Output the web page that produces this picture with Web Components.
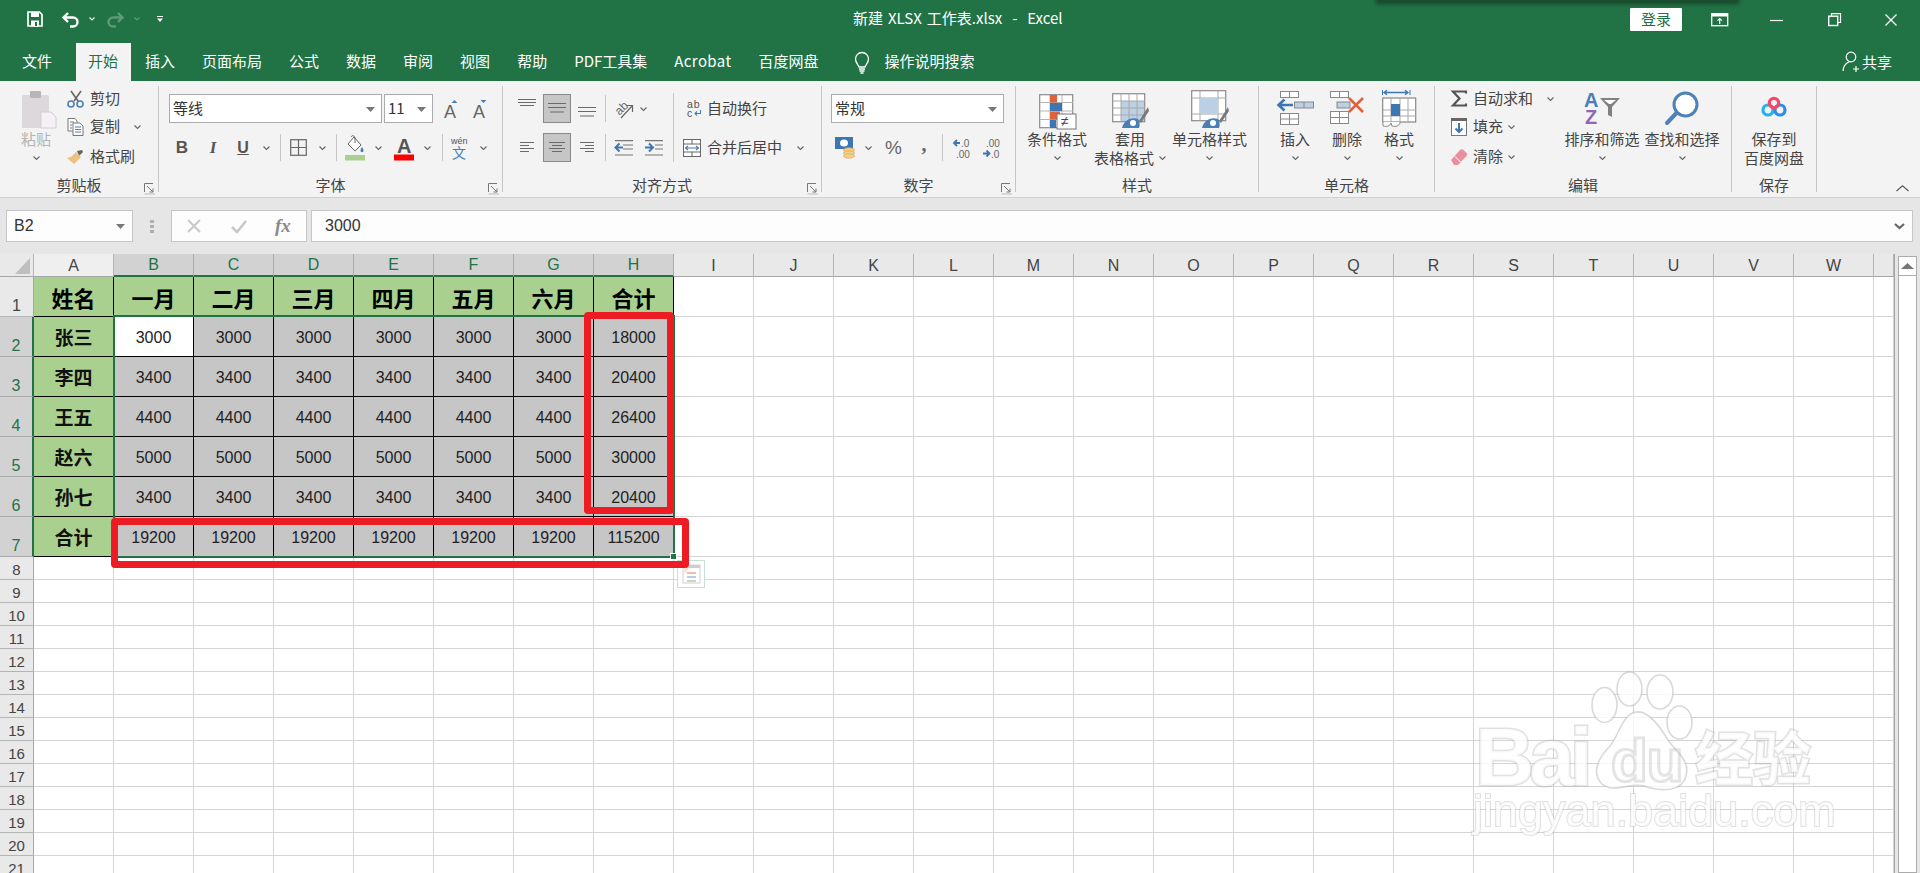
<!DOCTYPE html>
<html lang="zh-CN"><head><meta charset="utf-8"><title>新建 XLSX 工作表.xlsx - Excel</title>
<style>
html,body{margin:0;padding:0;height:873px;overflow:hidden;background:#e6e6e6}
body{font-family:"Noto Sans CJK SC","Liberation Sans",sans-serif;font-size:15px;color:#444}
xl-app{display:flex;flex-direction:column;width:1920px;height:873px;overflow:hidden}
</style></head><body>
<xl-app>
<xl-titlebar></xl-titlebar>
<xl-tabs></xl-tabs>
<xl-ribbon>
  <xl-group label="剪贴板" w="159" launcher="1" pl="6">
    <rb-large icon="paste" iw="40" ih="38" w="60" l1="粘贴" dim="1"></rb-large>
    <rb-stack ml="1">
      <rb-small icon="scissors" iw="17" ih="18" label="剪切" gap="6"></rb-small>
      <rb-small icon="copy" iw="17" ih="18" label="复制" gap="6" chev="14"></rb-small>
      <rb-small icon="brush" iw="17" ih="16" label="格式刷" gap="6"></rb-small>
    </rb-stack>
  </xl-group>
  <xl-group label="字体" w="344" launcher="1" pl="10">
    <rb-rows>
      <rb-row>
        <rb-select w="213" value="等线"></rb-select>
        <rb-select w="49" ml="2" value="11"></rb-select>
        <rb-i icon="aup" w="15" h="18" ml="11"></rb-i>
        <rb-i icon="adown" w="15" h="18" ml="14"></rb-i>
      </rb-row>
      <rb-row>
        <rb-i ml="6" w="14" h="20"><span style="font:700 17px 'Liberation Sans';color:#555">B</span></rb-i>
        <rb-i ml="18" w="12" h="20"><span style="font:italic 700 17px 'Liberation Serif';color:#555">I</span></rb-i>
        <rb-i ml="17" w="14" h="20"><span style="font:700 16px 'Liberation Sans';color:#555;text-decoration:underline">U</span></rb-i>
        <rb-i icon="chev" w="7" h="4" ml="13"></rb-i>
        <rb-i icon="sep" w="1" h="27" ml="10"></rb-i>
        <rb-i icon="borders" w="17" h="17" ml="9"></rb-i>
        <rb-i icon="chev" w="7" h="4" ml="12"></rb-i>
        <rb-i icon="sep" w="1" h="27" ml="10"></rb-i>
        <rb-i icon="fillc" w="20" h="24" ml="8"></rb-i>
        <rb-i icon="chev" w="7" h="4" ml="10"></rb-i>
        <rb-i icon="fontc" w="20" h="24" ml="12"></rb-i>
        <rb-i icon="chev" w="7" h="4" ml="10"></rb-i>
        <rb-i icon="sep" w="1" h="27" ml="11"></rb-i>
        <rb-i icon="wen" w="16" h="24" ml="8"></rb-i>
        <rb-i icon="chev" w="7" h="4" ml="13"></rb-i>
      </rb-row>
    </rb-rows>
  </xl-group>
  <xl-group label="对齐方式" w="319" launcher="1" pl="15">
    <rb-rows>
      <rb-row>
        <rb-i icon="atop" w="18" h="29"></rb-i>
        <rb-i icon="amid" w="28" h="29" ml="7" active="1"></rb-i>
        <rb-i icon="abot" w="18" h="29" ml="7"></rb-i>
        <rb-i icon="sep" w="1" h="27" ml="9"></rb-i>
        <rb-i icon="orient" w="18" h="22" ml="9"></rb-i>
        <rb-i icon="chev" w="7" h="4" ml="7"></rb-i>
      </rb-row>
      <rb-row>
        <rb-i icon="aleft" w="18" h="29"></rb-i>
        <rb-i icon="acen" w="28" h="29" ml="7" active="1"></rb-i>
        <rb-i icon="aright" w="18" h="29" ml="7"></rb-i>
        <rb-i icon="sep" w="1" h="27" ml="9"></rb-i>
        <rb-i icon="inddec" w="18" h="16" ml="9"></rb-i>
        <rb-i icon="indinc" w="18" h="16" ml="12"></rb-i>
      </rb-row>
    </rb-rows>
    <rb-i icon="sep" w="1" h="69" ml="10" top="1"></rb-i>
    <rb-rows>
      <rb-row><rb-small icon="abc" iw="16" ih="18" label="自动换行" gap="5" ml="12"></rb-small></rb-row>
      <rb-row><rb-small icon="merge" iw="18" ih="18" label="合并后居中" gap="6" ml="9" chev="15"></rb-small></rb-row>
    </rb-rows>
  </xl-group>
  <xl-group label="数字" w="194" launcher="1" pl="9">
    <rb-rows>
      <rb-row><rb-select w="173" value="常规"></rb-select></rb-row>
      <rb-row>
        <rb-i icon="currency" w="20" h="22" ml="4"></rb-i>
        <rb-i icon="chev" w="7" h="4" ml="10"></rb-i>
        <rb-i ml="14" w="15" h="20"><span style="font:400 19px 'Liberation Sans';color:#666">%</span></rb-i>
        <rb-i ml="19" w="8" h="20"><span style="font:700 20px 'Liberation Serif';color:#666;position:relative;top:-3px">,</span></rb-i>
        <rb-i icon="sep" w="1" h="27" ml="14"></rb-i>
        <rb-i icon="decinc" w="16" h="20" ml="10"></rb-i>
        <rb-i icon="decdec" w="16" h="20" ml="14"></rb-i>
      </rb-row>
    </rb-rows>
  </xl-group>
  <xl-group label="样式" w="243" pl="11">
    <rb-large icon="cond" iw="37" ih="34" w="60" l1="条件格式"></rb-large>
    <rb-large icon="tablef" iw="37" ih="35" w="76" ml="5" l1="套用" l2="表格格式"></rb-large>
    <rb-large icon="cellst" iw="38" ih="38" w="75" ml="4" l1="单元格样式"></rb-large>
  </xl-group>
  <xl-group label="单元格" w="176" pl="11">
    <rb-large icon="insert" iw="37" ih="34" w="50" ib="5" l1="插入"></rb-large>
    <rb-large icon="delete" iw="35" ih="33" w="50" ml="2" ib="6" l1="删除"></rb-large>
    <rb-large icon="format" iw="35" ih="37" w="50" ml="2" ib="3" l1="格式"></rb-large>
  </xl-group>
  <xl-group label="编辑" w="297" pl="16">
    <rb-stack w="110">
      <rb-small icon="sigma" iw="16" ih="17" label="自动求和" gap="6" chev="14"></rb-small>
      <rb-small icon="fill" iw="16" ih="18" label="填充" gap="6" chev="5"></rb-small>
      <rb-small icon="eraser" iw="16" ih="16" label="清除" gap="6" chev="5"></rb-small>
    </rb-stack>
    <rb-large icon="sort" iw="36" ih="32" w="76" ml="3" ib="6" l1="排序和筛选"></rb-large>
    <rb-large icon="find" iw="34" ih="34" w="76" ml="4" ib="5" l1="查找和选择"></rb-large>
  </xl-group>
  <xl-group label="保存" w="85">
    <rb-large icon="cloud" iw="26" ih="20" w="84" ib="13" l1="保存到" l2="百度网盘" nochev="1"></rb-large>
  </xl-group>
  <rb-collapse></rb-collapse>
</xl-ribbon>
<xl-formula></xl-formula>
<xl-sheetview></xl-sheetview>
</xl-app>
<script>
const G='#217346';
const L=(w,h,arr,c='#6a6a6a',sw=1.2)=>`<path d="${arr.map(a=>`M${a[0]} ${a[2]}H${a[1]}`).join('')}" stroke="${c}" stroke-width="${sw}" fill="none"/>`;
const ICONS={
 chev:`<path d="M.5 .5L3.5 3.5L6.5 .5" fill="none" stroke="#666" stroke-width="1.1"/>`,
 sep:`<rect width="1" height="100%" fill="#c6c6c6"/>`,
 save:`<path d="M1 1h11.5L15 3.5V15H1z" fill="none" stroke="#fff" stroke-width="1.7"/><rect x="4" y="1" width="8" height="5" fill="#fff"/><rect x="4" y="9.5" width="8" height="6" fill="#fff"/><rect x="8" y="11" width="2" height="4" fill="${G}"/>`,
 undo:`<path d="M7 2L2.5 6.5L7 11M3 6.5H12a4.5 4.5 0 0 1 0 9H9" fill="none" stroke="#fff" stroke-width="2.4"/>`,
 redo:`<path d="M12 2L16.5 6.5L12 11M16 6.5H7a4.5 4.5 0 0 0 0 9h3" fill="none" stroke="#5c9a78" stroke-width="2.4"/>`,
 chevw:`<path d="M.5 .5L3 3L5.5 .5" fill="none" stroke="#fff" stroke-width="1.1"/>`,
 chevd:`<path d="M.5 .5L3 3L5.5 .5" fill="none" stroke="#5c9a78" stroke-width="1.1"/>`,
 cust:`<path d="M0 .5H6" stroke="#fff" stroke-width="1"/><path d="M0 2.5H6L3 6z" fill="#fff"/>`,
 rdisp:`<rect x=".7" y=".7" width="16" height="12" fill="none" stroke="#fff" stroke-width="1.3"/><rect x="1" y="1" width="15" height="2.5" fill="#fff"/><path d="M8.7 11V5.5M6.5 7.7l2.2-2.2 2.2 2.2" fill="none" stroke="#fff" stroke-width="1.2"/>`,
 min:`<path d="M0 .5H13" stroke="#fff" stroke-width="1.2"/>`,
 restore:`<path d="M3.5 3V.7H12.5V9.5H10" fill="none" stroke="#fff" stroke-width="1.2"/><rect x=".7" y="3.2" width="9" height="9.3" fill="none" stroke="#fff" stroke-width="1.4"/>`,
 close:`<path d="M.5 .5L11.5 11.5M11.5 .5L.5 11.5" stroke="#fff" stroke-width="1.3"/>`,
 bulb:`<path d="M5 16C4 13 1.5 12 1.5 8A6.5 6.5 0 0 1 14.5 8C14.5 12 12 13 11 16Z" fill="none" stroke="#fff" stroke-width="1.3"/><path d="M5 18H11M5.5 20H10.5M6.5 22H9.5" stroke="#fff" stroke-width="1.4"/>`,
 person:`<circle cx="9" cy="6" r="4.8" fill="none" stroke="#fff" stroke-width="1.2"/><path d="M1 20C1.5 15 4 12 7 11M14 15V21M11 18H17" fill="none" stroke="#fff" stroke-width="1.2"/>`,
 launch:`<path d="M.5 9V.5H9" fill="none" stroke="#777" stroke-width="1"/><path d="M3 3L9 9M9 5.5V9H5.5" fill="none" stroke="#777" stroke-width="1"/><path d="M.5 11H11" stroke="#bbb"/>`,
 collapse:`<path d="M.5 6L6.5 .8L12.5 6" fill="none" stroke="#555" stroke-width="1.1"/>`,
 paste:`<g transform="translate(6 0)"><rect x="0" y="5" width="27" height="33" rx="1.5" fill="#dcd8dc"/><rect x="8" y="1" width="11" height="7" rx="1" fill="#b9b4b9"/><path d="M19 22H29L34 27V38H19z" fill="#f4f1f5" stroke="#d3ced3"/></g>`,
 scissors:`<path d="M4 1L11 11M14 1L7 11" stroke="#666" stroke-width="1.6"/><circle cx="4" cy="14" r="3" fill="none" stroke="#4a7fb5" stroke-width="1.6"/><circle cx="13" cy="14" r="3" fill="none" stroke="#4a7fb5" stroke-width="1.6"/>`,
 copy:`<path d="M1 .5H8L10 3V13H1z" fill="#fff" stroke="#777"/><path d="M6 5H13L16 8V17.5H6z" fill="#fff" stroke="#777"/><path d="M3 4H7M3 7H5M3 10H5" stroke="#777"/><path d="M8 9H14M8 11.5H14M8 14H14" stroke="#4a7fb5"/>`,
 brush:`<path d="M10 2L15 1L16 3L12 7z" fill="#666"/><path d="M9 3L14 8L7 15L0 9L4 8z" fill="#e8c27e"/>`,
 aup:`<text x="0" y="18" font-family="Liberation Sans" font-size="18" fill="#666">A</text><path d="M7.5 0L10.5 3H4.5z" transform="translate(3 0)" fill="#4a7fb5"/>`,
 adown:`<text x="0" y="18" font-family="Liberation Sans" font-size="18" fill="#666">A</text><path d="M7.5 3L10.5 0H4.5z" transform="translate(3 0)" fill="#4a7fb5"/>`,
 borders:`<rect x=".7" y=".7" width="15.6" height="15.6" fill="none" stroke="#666" stroke-width="1.2"/><path d="M8.5 1V16M1 8.5H16" stroke="#666" stroke-width="1.2"/>`,
 fillc:`<path d="M9 1L16 9L10 15L3 8z" fill="#fff" stroke="#666"/><path d="M6 1C7 -1 10 -1 10 3V7" fill="none" stroke="#666"/><path d="M17 11c2 3 2 5 0 5s-2-2 0-5z" fill="#4a7fb5"/><rect x="0" y="19" width="20" height="5.5" fill="#a9d08e"/>`,
 fontc:`<text x="3" y="17" font-family="Liberation Sans" font-weight="700" font-size="20" fill="#555">A</text><rect x="0" y="18.5" width="20" height="6" fill="#f00"/>`,
 wen:`<text x="0" y="8" font-family="Liberation Sans" font-size="9" fill="#555">wén</text><text x="1" y="22" font-family="Noto Sans CJK SC" font-size="14" fill="#4a7fb5">文</text>`,
 atop:L(18,29,[[0,18,5.5],[0,18,8.5],[2,16,11.5]]),
 amid:L(28,29,[[5,23,9.5],[5,23,13.5],[7,21,18]]),
 abot:L(18,29,[[0,18,13.5],[0,18,17.5],[2,16,22]]),
 aleft:L(18,29,[[2,16,9.5],[2,11,12.5],[2,16,15.5],[2,11,18.5]]),
 acen:L(28,29,[[6,22,9.5],[9,19,12.5],[6,22,15.5],[9,19,18.5]]),
 aright:L(18,29,[[2,16,9.5],[7,16,12.5],[2,16,15.5],[7,16,18.5]]),
 orient:`<text x="0" y="13" transform="rotate(-45 8 10)" font-family="Liberation Sans" font-size="12" fill="#666">ab</text><path d="M6 20L17 8M11 7.5H17.5V14" fill="none" stroke="#666" stroke-width="1.2"/>`,
 inddec:L(18,16,[[0,18,.7],[8,18,5],[8,18,9],[0,18,15]],'#777')+`<path d="M8 7.5H1M4.5 3.5L.5 7.5l4 4" fill="none" stroke="#3d77b3" stroke-width="2"/>`,
 indinc:L(18,16,[[0,18,.7],[10,18,5],[10,18,9],[0,18,15]],'#777')+`<path d="M0 7.5H7.5M4 3.5l4 4-4 4" fill="none" stroke="#3d77b3" stroke-width="2"/>`,
 abc:`<text x="1" y="8" font-family="Liberation Sans" font-size="10.5" letter-spacing=".8" fill="#555">ab</text><text x="1" y="17" font-family="Liberation Sans" font-size="10.5" fill="#555">c</text><path d="M14.5 10v3.5H9M11 11.5l-2 2 2 2" fill="none" stroke="#4a7fb5" stroke-width="1.1"/>`,
 merge:`<rect x=".5" y=".5" width="17" height="17" fill="#fff" stroke="#666"/><path d="M0 5H18M0 13H18M9 0V5M9 13V18" stroke="#666"/><path d="M2.5 9H15.5M5 6.8L2.5 9L5 11.2M13 6.8L15.5 9L13 11.2" fill="none" stroke="#3d77b3" stroke-width="1.1"/>`,
 currency:`<rect x="0" y="0" width="18" height="12" fill="#3d77b3"/><ellipse cx="9" cy="6" rx="4" ry="3.5" fill="#fff"/><ellipse cx="14" cy="13" rx="5.5" ry="2.2" fill="#f3cf8b" stroke="#d9a656" stroke-width=".7"/><ellipse cx="14" cy="16" rx="5.5" ry="2.2" fill="#f3cf8b" stroke="#d9a656" stroke-width=".7"/><ellipse cx="14" cy="19" rx="5.5" ry="2.2" fill="#f3cf8b" stroke="#d9a656" stroke-width=".7"/>`,
 decinc:`<path d="M7 5H1M4 2L1 5l3 3" fill="none" stroke="#3d77b3" stroke-width="1.8"/><text x="8" y="9" font-family="Liberation Sans" font-size="10" fill="#666">.0</text><text x="3" y="20" font-family="Liberation Sans" font-size="10" fill="#666">.00</text>`,
 decdec:`<text x="3" y="9" font-family="Liberation Sans" font-size="10" fill="#666">.00</text><path d="M0 15.5H6M3.5 12.5l3 3-3 3" fill="none" stroke="#3d77b3" stroke-width="1.8"/><text x="8" y="20" font-family="Liberation Sans" font-size="10" fill="#666">.0</text>`,
 cond:`<rect x=".7" y=".7" width="33" height="33" fill="#fff" stroke="#8a8a8a" stroke-width="1.2"/><path d="M1 8.5H34M1 17H34M1 25.5H34M11 1V34M23 1V34" stroke="#b3b3b3"/><rect x="11" y="1" width="7" height="7.5" fill="#e0623c"/><rect x="11" y="9" width="12" height="8" fill="#3d77b3"/><rect x="11" y="17.5" width="10" height="8" fill="#e0623c"/><rect x="11" y="26" width="6" height="8" fill="#3d77b3"/><rect x="18" y="20" width="19" height="15" fill="#fff" stroke="#777"/><text x="22" y="32" font-family="Liberation Sans" font-size="14" fill="#444">≠</text>`,
 tablef:`<rect x=".7" y=".7" width="32" height="28" fill="#fff" stroke="#8a8a8a" stroke-width="1.2"/><rect x="9" y="8" width="23" height="20" fill="#bcd0e5"/><path d="M1 8H33M1 15H33M1 22H33M9 1V29M17 1V29M25 1V29" stroke="#a8a8a8"/><path d="M36 14L27 28l2 2 8-12z" fill="#7a7a7a"/><path d="M10 35C11 29 18 23 26 26C29 29 27 35 27 35z" fill="#4a7fb5"/><circle cx="21" cy="30" r="3" fill="#fff"/>`,
 cellst:`<rect x=".7" y=".7" width="34" height="30" fill="#fff" stroke="#8a8a8a" stroke-width="1.2"/><path d="M1 8H35M1 24H35M9 1V31M27 1V31" stroke="#a8a8a8"/><rect x="9" y="8" width="18" height="16" fill="#bcd0e5"/><path d="M37 17L28 31l2 2 8-12z" fill="#7a7a7a"/><path d="M11 38C12 32 19 26 27 29C30 32 28 38 28 38z" fill="#4a7fb5"/><circle cx="22" cy="33" r="3" fill="#fff"/>`,
 insert:`<rect x="3.5" y=".5" width="18" height="6" fill="#fff" stroke="#888"/><path d="M12.5 1V6" stroke="#888"/><path d="M16 14H2M7.5 8.5L1.5 14l6 5.5" fill="none" stroke="#3d77b3" stroke-width="2.6"/><rect x="17.5" y="11" width="19" height="6" fill="#bcd0e5" stroke="#888"/><path d="M27 11V17" stroke="#888"/><rect x="3.5" y="22.5" width="18" height="11" fill="#fff" stroke="#888"/><path d="M3 28H22M12.5 23V33" stroke="#888"/>`,
 delete:`<rect x=".5" y=".5" width="18" height="6" fill="#fff" stroke="#888"/><path d="M9.5 1V6" stroke="#888"/><rect x="7" y="11" width="13" height="6" fill="#bcd0e5" stroke="#888"/><path d="M19 7L33 21M33 7L19 21" stroke="#e0623c" stroke-width="2.6"/><rect x=".5" y="20.5" width="18" height="12" fill="#fff" stroke="#888"/><path d="M0 26.5H19M9.5 21V32" stroke="#888"/>`,
 format:`<path d="M.5 0V5M28 0V5" stroke="#3d77b3"/><path d="M2 2.5H26M5 .2L2 2.5L5 4.8M23 .2L26 2.5L23 4.8" fill="none" stroke="#3d77b3" stroke-width="1.4"/><rect x=".7" y="8" width="33" height="24" fill="#fff" stroke="#888" stroke-width="1.2"/><path d="M1 20H34M1 26H34M9 8V32M18 8V32M26 8V32" stroke="#a8a8a8"/><rect x="9" y="14" width="9" height="12" fill="#3d77b3"/><path d="M1 32V36C5 37 8 36 9 33L10 36C14 37 17 36 18 33V32" fill="#fff" stroke="#888"/>`,
 sigma:`<path d="M15 3.5V1.5H2L8.5 8.5 2 15.5H15V13.5" fill="none" stroke="#555" stroke-width="2.2"/>`,
 fill:`<rect x=".5" y=".5" width="15" height="17" fill="#fff" stroke="#777"/><rect x="0" y="0" width="16" height="3" fill="#666"/><path d="M8 5V14M4.5 10.5L8 14l3.5-3.5" fill="none" stroke="#3d77b3" stroke-width="2"/>`,
 eraser:`<path d="M0 11L9 1C10 0 11.5 0 12.5 1L15.5 4C16.5 5 16.5 6 15.5 7L7 16H3z" fill="#e8909c"/><path d="M4 7.5L9.5 13" stroke="#fff"/>`,
 sort:`<text x="0" y="15" font-family="Liberation Sans" font-weight="700" font-size="20" fill="#4a7fb5">A</text><text x="1" y="32" font-family="Liberation Sans" font-weight="700" font-size="20" fill="#8c68b5">Z</text><path d="M16 6H36L28 15V25L24 23V15z" fill="#808080"/><path d="M20 8H32L27 12H25z" fill="#fff"/>`,
 find:`<circle cx="20.5" cy="13.5" r="11.5" fill="#fff" stroke="#4d82b8" stroke-width="3"/><path d="M11.5 22L2 32" stroke="#4d82b8" stroke-width="4" stroke-linecap="round"/>`,
 cloud:`<circle cx="7" cy="13" r="5" fill="none" stroke="#21b4ee" stroke-width="3.2"/><circle cx="19" cy="13" r="5" fill="none" stroke="#2c8fe6" stroke-width="3.2"/><circle cx="13" cy="6" r="4.6" fill="none" stroke="#f2496b" stroke-width="3.2"/>`,
 X:`<path d="M1 1L13 13M13 1L1 13" stroke="#c8c8c8" stroke-width="2"/>`,
 check:`<path d="M1 8L6 13L15 2" fill="none" stroke="#c8c8c8" stroke-width="2.6"/>`,
 cdown:`<path d="M0 0H9L4.5 5z" fill="#777"/>`,
 cdown2:`<path d="M1 1L5.5 5L10 1" fill="none" stroke="#666" stroke-width="2.2"/>`,
 dots:`<path d="M0 1H4V4H0zM0 6H4V9H0zM0 11H4V14H0z" fill="#b0b0b0"/>`,
 corner:`<path d="M15 0V16H0z" fill="#bfbfbf"/>`,
 qa:`<rect x=".5" y=".5" width="27" height="27" fill="#fff" fill-opacity=".85" stroke="#c6e0d4"/><rect x="6" y="5" width="17" height="18" fill="#fff" stroke="#d0d0d0"/><rect x="8" y="5" width="15" height="3" fill="#cfcfcf"/><path d="M10 13H19" stroke="#f2c09a" stroke-width="2"/><path d="M10 17H19" stroke="#b6cde6" stroke-width="2"/><path d="M10 21H19" stroke="#c8d8c0" stroke-width="2"/><path d="M6 8L12 8L8 14z" fill="#fae3d0"/>`,
 up:`<path d="M6.5 0L13 6H0z" fill="#777"/>`
};
const svg=(n,w,h)=>`<svg width="${w}" height="${h}" viewBox="0 0 ${w} ${h}" style="display:block;overflow:visible" aria-hidden="true">${ICONS[n]}</svg>`;
function def(name,css,render){
  customElements.define(name,class extends HTMLElement{
    constructor(){super();this.attachShadow({mode:'open'});}
    connectedCallback(){this.shadowRoot.innerHTML=`<style>${css(this)}</style>`+render(this);}
  });
}
const A=(e,k,d='')=>e.hasAttribute(k)?e.getAttribute(k):d;
const FONT=`font-family:"Noto Sans CJK SC","Liberation Sans",sans-serif;`;

def('xl-titlebar',()=>`:host{display:flex;align-items:center;height:43px;background:${G};color:#fff;position:relative;flex:none;${FONT}}
 .ic{flex:none}
 .qat{display:flex;align-items:center;padding-left:27px;padding-bottom:5px}
 .title{position:absolute;left:853px;top:7px;font-size:15px;line-height:22px;white-space:pre;word-spacing:1.6px}
 .right{margin-left:auto;display:flex;align-items:center;padding-bottom:4px}
 .login{width:52px;height:23px;background:#fff;color:${G};font-size:15px;line-height:21px;text-align:center;border-radius:1px}
 .shadow{position:absolute;left:1378px;width:359px;top:-4px;height:5px;background:#1a4d30;box-shadow:0 1px 4px 2px rgba(20,50,30,.7)}`,
 ()=>`<div class="qat">${svg('save',16,16)}<span style="width:18px"></span>${svg('undo',19,16)}<span style="width:9px"></span>${svg('chevw',6,4)}<span style="width:11px"></span>${svg('redo',19,16)}<span style="width:9px"></span>${svg('chevd',6,4)}<span style="width:17px"></span>${svg('cust',6,6)}</div>
 <div class="title">新建 XLSX 工作表.xlsx  -  Excel</div><div class="shadow"></div>
 <div class="right"><div class="login">登录</div><span style="width:29px"></span>${svg('rdisp',17,13)}<span style="width:42px"></span><span style="position:relative;top:1px">${svg('min',13,1)}</span><span style="width:45px"></span>${svg('restore',13,13)}<span style="width:44px"></span>${svg('close',12,12)}<span style="width:23px"></span></div>`);

def('xl-tabs',()=>`:host{display:flex;height:38px;background:${G};color:#fff;font-size:15px;flex:none;position:relative;padding-left:9.5px;${FONT}}
 .t{padding:0 12.5px;margin-right:2px;line-height:35px;white-space:nowrap}
 .a{background:#f3f3f3;color:${G}}
 .lat{letter-spacing:.4px}
 .search{display:flex;align-items:center;margin-left:20.5px}
 .search span{margin-left:15px;padding-bottom:3px}
 .share{margin-left:auto;display:flex;align-items:center;padding-right:28px;padding-bottom:1px}
 .share span{margin-left:2px}`,
 ()=>{const t=['页面布局','公式','数据','审阅','视图','帮助','PDF工具集','Acrobat','百度网盘'];
 return `<div class="t" style="margin-right:11px">文件</div><div class="t a">开始</div><div class="t">插入</div>`+t.map(x=>`<div class="t ${x=='Acrobat'?'lat':''}">${x}</div>`).join('')+
 `<div class="search">${svg('bulb',16,23)}<span>操作说明搜索</span></div><div class="share">${svg('person',18,22)}<span>共享</span></div>`;});

def('xl-ribbon',()=>`:host{display:flex;height:111px;padding-top:5px;background:#f3f3f3;border-bottom:1px solid #d0d0d0;flex:none;align-items:flex-start;position:relative}`,()=>`<slot></slot>`);
def('xl-group',e=>`:host{display:block;box-sizing:border-box;width:${A(e,'w')}px;height:106px;border-right:1px solid #c6c6c6;position:relative;flex:none}
 .b{display:flex;height:90px;padding-left:${A(e,'pl','0')}px;align-items:flex-start}
 .l{text-align:center;font-size:15px;line-height:20px;height:20px;color:#444;white-space:nowrap;margin-top:-1px}
 .ln{position:absolute;right:3px;bottom:-2px;line-height:0}`,
 e=>`<div class="b"><slot></slot></div><div class="l">${A(e,'label')}</div>${e.hasAttribute('launcher')?`<div class="ln">${svg('launch',11,11)}</div>`:''}`);
def('rb-large',e=>`:host{display:flex;flex-direction:column;align-items:center;width:${A(e,'w')}px;margin-left:${A(e,'ml','0')}px;flex:none;font-size:15px;color:${e.hasAttribute('dim')?'#b4b4b4':'#444'}}
 .i{height:${44-(+A(e,'ib','2'))}px;padding-bottom:${(+A(e,'ib','2'))-1}px;display:flex;align-items:flex-end}
 .ln{height:19px;line-height:17px;white-space:nowrap;display:flex;align-items:center;justify-content:center}
 .c{margin-left:5px}`,
 e=>{const l2=A(e,'l2'),no=e.hasAttribute('nochev');
 return `<div class="i">${svg(A(e,'icon'),A(e,'iw'),A(e,'ih'))}</div><div class="ln">${A(e,'l1')}</div><div class="ln">${l2}${no?'':`<span class="${l2?'c':''}">${svg('chev',7,4)}</span>`}</div>`;});
def('rb-stack',e=>`:host{display:grid;grid-template-rows:25px 31px 29px;${e.hasAttribute('w')?`width:${A(e,'w')}px;`:''}margin-left:${A(e,'ml','0')}px;flex:none}`,()=>`<slot></slot>`);
def('rb-small',e=>`:host{display:flex;align-items:center;font-size:15px;color:#444;white-space:nowrap;margin-left:${A(e,'ml','0')}px}
 .t{margin-left:${A(e,'gap','6')}px;line-height:20px;padding-bottom:2px}.c{margin-left:${A(e,'chev','0')}px}`,
 e=>`${svg(A(e,'icon'),A(e,'iw'),A(e,'ih'))}<span class="t">${A(e,'label')}</span>${e.hasAttribute('chev')?`<span class="c">${svg('chev',7,4)}</span>`:''}`);
def('rb-rows',()=>`:host{display:flex;flex-direction:column;gap:10px;padding-top:8px;flex:none}`,()=>`<slot></slot>`);
def('rb-row',()=>`:host{display:flex;align-items:center;height:29px}`,()=>`<slot></slot>`);
def('rb-select',e=>`:host{display:flex;align-items:center;justify-content:space-between;box-sizing:border-box;width:${A(e,'w')}px;height:29px;margin-left:${A(e,'ml','0')}px;background:#fff;border:1px solid #ababab;padding:0 8px 2px 3px;font-size:15px;color:#333;flex:none}`,
 e=>`<span>${A(e,'value')}</span><span style="position:relative;top:1px">${svg('cdown',7,4)}</span>`);
def('rb-i',e=>`:host{display:flex;align-items:center;justify-content:center;box-sizing:border-box;flex:none;width:${A(e,'w')}px;height:${A(e,'h')}px;margin-left:${A(e,'ml','0')}px;${e.hasAttribute('active')?'background:#c6c6c6;border:1px solid #8a8a8a;':''}${e.hasAttribute('top')?'margin-top:7px;':''}}
 svg{position:${e.hasAttribute('active')?'absolute':'static'}}`,
 e=>{const n=A(e,'icon');return n?svg(n,A(e,'w'),A(e,'h')):'<slot></slot>';});
def('rb-collapse',()=>`:host{margin-left:auto;padding-right:11px;padding-top:99px;line-height:0}`,()=>svg('collapse',13,7));

def('xl-formula',()=>`:host{display:flex;height:56px;box-sizing:border-box;padding:12px 7px 12px 6px;background:#e6e6e6;flex:none;font-size:16px;color:#333;font-family:"Liberation Sans",sans-serif}
 .box{background:#fdfdfd;border:1px solid #c6c6c6;box-sizing:border-box;height:32px;display:flex;align-items:center}
 .name{width:127px;padding:0 7px;justify-content:space-between}
 .dots{width:37px;display:flex;align-items:center;justify-content:center;padding-right:1px}
 .fn{width:136px;padding-left:15px}
 .fx{font:italic 700 19px "Liberation Serif";color:#8a8a8a;margin-left:28px}
 .input{margin-left:4px;flex:1;padding:0 7px 0 13px;justify-content:space-between}`,
 ()=>`<div class="box name"><span>B2</span>${svg('cdown',9,5)}</div><div class="dots">${svg('dots',4,14)}</div>
 <div class="box fn">${svg('X',14,14)}<span style="width:30px"></span>${svg('check',16,14)}<span class="fx">fx</span></div>
 <div class="box input"><span>3000</span>${svg('cdown2',11,6)}</div>`);

def('xl-sheetview',()=>`:host{display:flex;flex:1;min-height:0;background:#e6e6e6}
 .bar{width:19px;margin-left:3px;margin-top:2px;display:flex;flex-direction:column;box-sizing:border-box;flex:none}
 .up{height:20px;background:#fff;border:1px solid #ababab;box-sizing:border-box;display:flex;align-items:center;justify-content:center}
 .tr{flex:1;background:#fff;border:1px solid #ababab;border-top:none;box-sizing:border-box;margin-top:0}`,
 ()=>`<xl-grid></xl-grid><div class="bar"><div class="up">${svg('up',13,6)}</div><div class="tr"></div></div>`);

def('xl-grid',()=>`:host{display:block;position:relative;width:1895px;height:619px;overflow:hidden;flex:none;border-right:1px solid #a6a6a6;box-sizing:border-box;background:#fff}
 .g{display:grid;grid-template-columns:34px repeat(23,80px) 20px;grid-template-rows:23px repeat(7,40px) repeat(14,23px);font-family:"Liberation Sans",sans-serif}
 .g>div{box-sizing:border-box;display:flex;align-items:center;justify-content:center;border-right:1px solid #d4d4d4;border-bottom:1px solid #d4d4d4;background:#fff;min-width:0;overflow:hidden}
 .g>.ch{background:#e9e9e9;border-right-color:#b5b5b5;border-bottom:1px solid #a6a6a6;color:#444;font-size:16px;padding-top:1px}
 .g>.ch.a{background:#efefef}
 .g>.ch.s{background:#d2d2d2;color:${G};border-bottom:2px solid ${G};border-right-color:#ababab}
 .g>.corner{background:#e9e9e9;border-right-color:#b5b5b5;border-bottom:1px solid #a6a6a6;align-items:flex-end;justify-content:flex-end;padding:0 3px 2px 0}
 .g>.rh{background:#e9e9e9;border-bottom-color:#b5b5b5;border-right:1px solid #a6a6a6;color:#444;font-size:15px;align-items:flex-end;padding-bottom:1px}
 .g>.rh.big{font-size:16px}
 .g>.rh.s{background:#d2d2d2;color:${G};border-right:2px solid ${G};border-bottom-color:#ababab}
 .g>.tb{border-right-color:#000;border-bottom-color:#000;color:#222;font-size:16px;padding-top:2px}
 .g>.hd{background:#a9d08e;font:700 22px "Noto Sans CJK SC",sans-serif;color:#000;padding-top:0}
 .g>.nm{background:#a9d08e;font:700 19px "Noto Sans CJK SC",sans-serif;color:#111;padding-top:0}
 .g>.sel{background:#c6c6c6}
 .selbox{position:absolute;left:113px;top:61px;width:562px;height:243px;border:2px solid ${G};box-sizing:border-box;pointer-events:none}
 .handle{position:absolute;left:670px;top:299px;width:7px;height:7px;background:${G};border:1px solid #fff;box-sizing:border-box}
 .qa{position:absolute;left:677px;top:306px;line-height:0}
 .red{position:absolute;border:7px solid #ed1c24;border-radius:4px;box-sizing:border-box}
 .wm{position:absolute;left:1470px;top:410px;width:360px;height:175px;pointer-events:none;filter:blur(.4px)}
 .wm span{position:absolute;color:rgba(255,255,255,.82);-webkit-text-stroke:3px rgba(170,170,170,.35);paint-order:stroke fill;white-space:nowrap;line-height:1}
 .wm svg{position:absolute;left:0;top:0}`,
 ()=>{
  const cols='ABCDEFGHIJKLMNOPQRSTUVW'.split('');
  let h=`<div class="corner">${svg('corner',15,16)}</div>`;
  cols.forEach((c,i)=>{h+=`<div class="ch ${i==0?'a':''} ${i>=1&&i<=7?'s':''}">${c}</div>`});
  h+=`<div class="ch"></div>`;
  const hdr=['姓名','一月','二月','三月','四月','五月','六月','合计'];
  const data=[['张三',3000,18000],['李四',3400,20400],['王五',4400,26400],['赵六',5000,30000],['孙七',3400,20400],['合计',19200,115200]];
  for(let r=1;r<=21;r++){
    h+=`<div class="rh ${r>=2&&r<=7?'s':''} ${r<=7?'big':''}">${r}</div>`;
    for(let c=0;c<24;c++){
      let cl='',t='';
      if(c<8&&r<=7){
        cl='tb ';
        if(r==1){cl+='hd';t=hdr[c];}
        else{const d=data[r-2];
          if(c==0){cl+='nm';t=d[0];}
          else{cl+=(r==2&&c==1)?'':'sel';t=c==7?d[2]:(r==7?19200:d[1]);}
        }
      }
      h+=`<div class="${cl}">${t}</div>`;
    }
  }
  return `<div class="g">${h}</div>
  <div class="selbox"></div><div class="handle"></div><div class="qa">${svg('qa',28,28)}</div>
  <div class="wm"><svg width="360" height="175" viewBox="0 0 360 175" fill="rgba(255,255,255,.8)" stroke="rgba(170,170,170,.45)" stroke-width="1.6"><ellipse cx="134.5" cy="41" rx="12.5" ry="17.5"/><ellipse cx="159.5" cy="7" rx="12.5" ry="17" transform="translate(0 18)"/><ellipse cx="190" cy="28" rx="13" ry="17"/><ellipse cx="209.5" cy="58.5" rx="12.5" ry="16.5"/><path d="M158 52C172 40 186 56 198 76C208 90 220 96 216 112C212 128 192 128 174 122C160 118 144 130 132 120C120 108 130 92 140 82C148 72 150 60 158 52Z"/></svg>
  <span style="left:5px;top:46px;font:700 82px 'Liberation Sans';letter-spacing:-5px">Bai</span>
  <span style="left:141px;top:62px;font:700 60px 'Liberation Sans';letter-spacing:-1px;color:rgba(255,255,255,.2)">du</span>
  <span style="left:225px;top:49px;font:700 58px 'Noto Sans CJK SC'">经验</span>
  <span style="left:3px;top:121px;font:400 45px 'Liberation Sans';-webkit-text-stroke-width:2px">jingyan.baidu.com</span></div>
  <div class="red" style="left:584px;top:58px;width:90px;height:202px"></div>
  <div class="red" style="left:111px;top:264px;width:578px;height:50px"></div>`;
 });
def('xl-app',()=>`:host{display:flex;flex-direction:column;width:1920px;height:873px;overflow:hidden;${FONT}}`,()=>`<slot></slot>`);
</script>
</body></html>
